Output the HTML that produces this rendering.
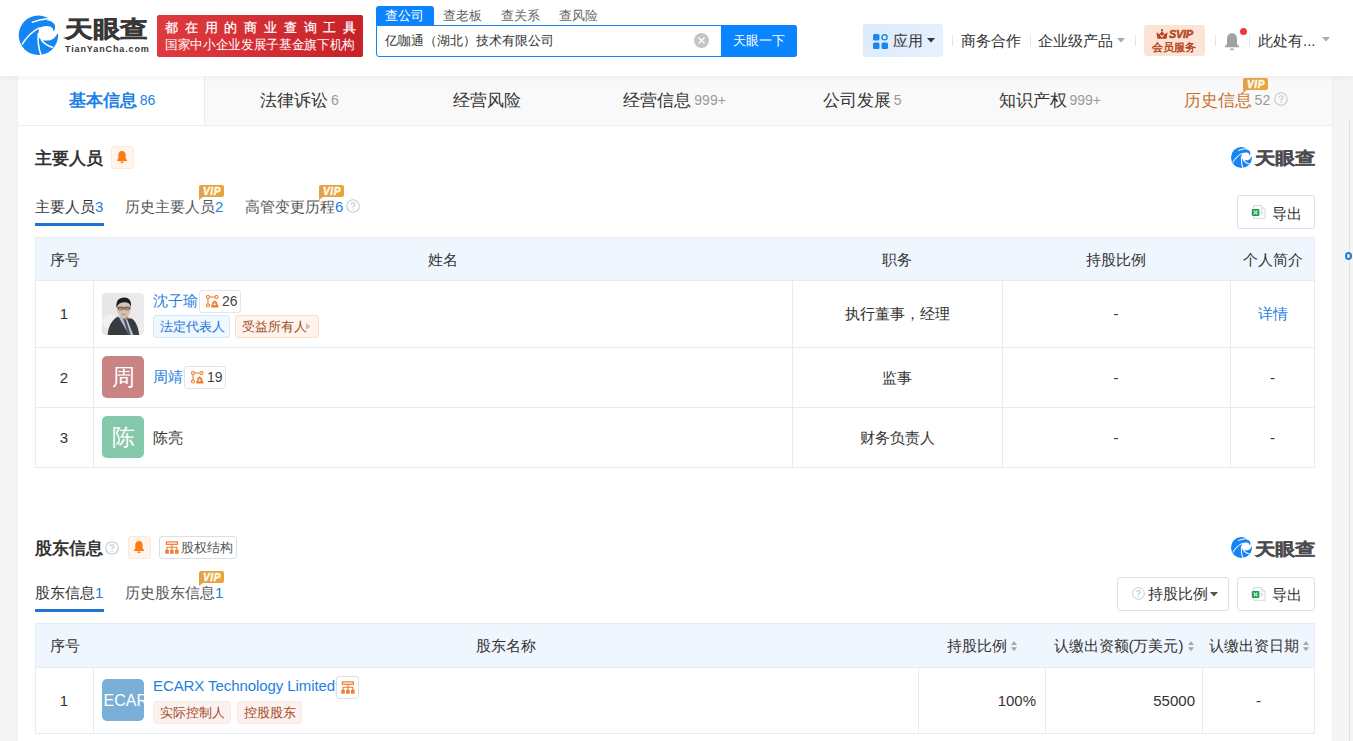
<!DOCTYPE html>
<html><head><meta charset="utf-8">
<style>
*{box-sizing:border-box;margin:0;padding:0}
html,body{width:1353px;height:741px;overflow:hidden;background:#f5f5f5;font-family:"Liberation Sans",sans-serif;color:#333}
.a{position:absolute;white-space:nowrap}
#hdr{position:absolute;left:0;top:0;width:1353px;height:76px;background:#fff;box-shadow:0 2px 6px rgba(0,0,0,0.05);z-index:5}
#main{position:absolute;left:18px;top:76px;width:1314px;height:700px;background:#fff;box-shadow:0 0 2px rgba(0,0,0,0.07)}
#tabbar{position:absolute;left:18px;top:76px;width:1314px;height:50px;background:#f9f9f9;border-bottom:1px solid #ededed}
.tab{position:absolute;top:0;height:49px;width:187.6px;text-align:center;font-size:17px;line-height:49px;color:#333}
.tab sup{font-size:14px;color:#999;vertical-align:baseline;position:relative;top:-1px;margin-left:3px}
.sep{position:absolute;width:1px;background:#e4e4e4}
.vip{position:absolute;width:25px;height:12px;background:linear-gradient(90deg,#e3a14a,#e7a63f);border-radius:2px 2px 2px 0;color:#fffbe9;font:italic bold 10px/13px "Liberation Sans",sans-serif;text-align:center;letter-spacing:0.7px;text-indent:1px;-webkit-text-stroke:0.45px #fffbe9}
.vip:after{content:"";position:absolute;left:0;bottom:-3px;border-left:4px solid #e3a14a;border-bottom:3px solid transparent}
.q{position:absolute;border:1px solid #c8ccd2;border-radius:50%;color:#b5b9bf;font-size:10px;text-align:center}
.bellbox{position:absolute;width:23px;height:23px;background:#fff5ec;border:1px solid #fbe9dc;border-radius:3px}
.btn{position:absolute;border:1px solid #dcdfe5;border-radius:3px;background:#fff}
table{border-collapse:collapse;position:absolute}
.tbl td,.tbl th{border:1px solid #e5ecf3;font-weight:normal;font-size:15px;color:#333}
.tbl th{background:#eff6fd;height:44px}
.blue{color:#1e7fe0}
.tag{position:absolute;white-space:nowrap;height:23px;font-size:13px;line-height:21px;border-radius:3px;padding:0 6px}
.tagb{background:#eff7ff;border:1px solid #d5e7fb;color:#2174d2}
.tago{background:#fff4eb;border:1px solid #fbdfcb;color:#9e4a26}
.tagp{background:#fdf1ef;border:1px solid #fbe9e5;color:#9e4a26}
.cnt{position:absolute;white-space:nowrap;height:23px;border:1px solid #e3e5e8;border-radius:3px;font-size:14px;line-height:21px;color:#444;padding-left:22px}
.av{position:absolute;width:42px;height:42px;border-radius:5px;color:#fff;font-size:23px;line-height:42px;text-align:center}
</style></head><body>

<!-- HEADER -->
<div id="hdr">
  <svg class="a" style="left:16px;top:12px" width="46" height="46" viewBox="0 0 46 46"><circle cx="22.4" cy="23.3" r="19.7" fill="#1485f2"/>
<path d="M22.9 16Q29 13 34.3 14.5Q37.2 15.8 37.7 19.4Q40.3 15.5 38.2 11.8Q35.5 8.6 31 8.5L32.6 6.3L46 2L46 21.6L41.4 21.6Q40 25 37.7 26.4Q34.5 28.6 31 28.6Q27.5 28.6 25.6 28Q22.6 26.5 22.4 23Z" fill="#fff"/>
<path d="M15.8 10.4Q23 7.2 32.6 6.4" stroke="#fff" stroke-width="1.5" fill="none"/>
<path d="M6 32.5Q13 21 23.6 15.6" stroke="#fff" stroke-width="1.5" fill="none"/>
<path d="M22.3 21Q21.3 33 25 43" stroke="#fff" stroke-width="1.5" fill="none"/>
<path d="M25.3 27.8Q29.5 33.5 37 35.5" stroke="#fff" stroke-width="1.5" fill="none"/>
</svg>
  <div class="a" style="left:65px;top:15px;font-size:28px;font-weight:bold;color:#3a3636;-webkit-text-stroke:0.7px #3a3636;line-height:36px;transform:scale(0.985,0.82);transform-origin:0 0">天眼查</div>
  <div class="a" style="left:65px;top:44px;font-size:9px;font-weight:bold;color:#3a3636;letter-spacing:0.88px;line-height:10px">TianYanCha.com</div>
  <div class="a" style="left:157px;top:15px;width:206px;height:42px;border-radius:2px;background:linear-gradient(90deg,#df3a40,#c82229)"></div>
  <div class="a" style="left:165px;top:19px;font-size:13px;color:#fff;letter-spacing:6.8px;line-height:18px;-webkit-text-stroke:0.25px #fff">都在用的商业查询工具</div>
  <div class="a" style="left:165px;top:36px;font-size:13px;color:#fff;line-height:18px;transform:scaleX(0.975);transform-origin:0 0">国家中小企业发展子基金旗下机构</div>

  <div class="a" style="left:376px;top:6px;width:58px;height:20px;background:#0a84ff;border-radius:3px 3px 0 0"></div>
  <div class="a" style="left:385px;top:6px;font-size:13px;color:#fff;line-height:19px">查公司</div>
  <div class="a" style="left:443px;top:6px;font-size:13px;color:#666;line-height:19px">查老板</div>
  <div class="a" style="left:501px;top:6px;font-size:13px;color:#666;line-height:19px">查关系</div>
  <div class="a" style="left:559px;top:6px;font-size:13px;color:#666;line-height:19px">查风险</div>
  <div class="a" style="left:376px;top:25px;width:421px;height:32px;border:1px solid #1e82e6;border-radius:0 3px 3px 3px;background:#fff"></div>
  <div class="a" style="left:385px;top:31px;font-size:13px;color:#333;line-height:19px">亿咖通（湖北）技术有限公司</div>
  <div class="a" style="left:694px;top:33px;width:15px;height:15px;border-radius:50%;background:#c3c4c8"></div>
  <svg class="a" style="left:694px;top:33px" width="15" height="15"><path d="M4.5 4.5L10.5 10.5M10.5 4.5L4.5 10.5" stroke="#fff" stroke-width="1.3"/></svg>
  <div class="a" style="left:721px;top:25px;width:76px;height:32px;background:#0a84ff;border-radius:0 3px 3px 0"></div>
  <div class="a" style="left:733px;top:31px;font-size:13px;color:#fff;line-height:19px">天眼一下</div>

  <div class="a" style="left:863px;top:24px;width:80px;height:33px;background:linear-gradient(135deg,#dbeafc,#e8f1fd);border-radius:3px"></div>
  <svg class="a" style="left:873px;top:34px" width="15" height="15">
    <rect x="0" y="0" width="6.5" height="6.5" rx="1.5" fill="#1a86f0"/>
    <circle cx="11.5" cy="3.3" r="2.6" fill="none" stroke="#1a86f0" stroke-width="1.4"/>
    <rect x="0" y="8.5" width="6.5" height="6.5" rx="1.5" fill="#1a86f0"/>
    <rect x="8.5" y="8.5" width="6.5" height="6.5" rx="1.5" fill="#1a86f0"/>
  </svg>
  <div class="a" style="left:893px;top:31px;font-size:15px;color:#333;line-height:19px">应用</div>
  <svg class="a" style="left:927px;top:38px" width="8" height="5"><path d="M0 0H8L4 4.5Z" fill="#333"/></svg>
  <div class="sep" style="left:952px;top:35px;height:11px"></div>
  <div class="a" style="left:961px;top:31px;font-size:15px;color:#333;line-height:19px">商务合作</div>
  <div class="sep" style="left:1030px;top:35px;height:11px"></div>
  <div class="a" style="left:1038px;top:31px;font-size:15px;color:#333;line-height:19px">企业级产品</div>
  <svg class="a" style="left:1117px;top:38px" width="8" height="5"><path d="M0 0H8L4 4.5Z" fill="#aaa"/></svg>
  <div class="sep" style="left:1135px;top:35px;height:11px"></div>
  <div class="a" style="left:1144px;top:25px;width:61px;height:31px;background:#fde3d6;border-radius:3px"></div>
  <svg class="a" style="left:1156px;top:29px" width="12" height="10" viewBox="0 0 12 10"><path d="M0.4 3.2L3.4 5.2L6 2L8.6 5.2L11.6 3.2L10.6 9.7H1.4Z" fill="#b4461c"/><circle cx="6" cy="1.2" r="1.1" fill="#b4461c"/><path d="M4.2 5.9L6 8L7.8 5.9" stroke="#fde3d6" stroke-width="1.1" fill="none"/></svg>
  <div class="a" style="left:1169px;top:28px;font-size:11px;font-weight:bold;font-style:italic;color:#b4461c;line-height:12px;letter-spacing:-0.3px;-webkit-text-stroke:0.4px #b4461c">SVIP</div>
  <div class="a" style="left:1152px;top:40px;font-size:11px;font-weight:bold;color:#b4461c;line-height:15px">会员服务</div>
  <div class="sep" style="left:1215px;top:35px;height:11px"></div>
  <svg class="a" style="left:1224px;top:32px" width="16" height="19" viewBox="0 0 16 19">
    <path d="M8 1.2C4.6 1.2 3 3.8 3 7V12L1 14.2V15.2H15V14.2L13 12V7C13 3.8 11.4 1.2 8 1.2Z" fill="#9fa3a8"/>
    <rect x="6" y="16.4" width="4" height="1.6" rx="0.8" fill="#9fa3a8"/>
  </svg>
  <div class="a" style="left:1240px;top:28px;width:7px;height:7px;border-radius:50%;background:#f0353b"></div>
  <div class="sep" style="left:1249px;top:35px;height:11px"></div>
  <div class="a" style="left:1258px;top:31px;font-size:15px;color:#333;line-height:19px">此处有...</div>
  <svg class="a" style="left:1322px;top:37px" width="8" height="5"><path d="M0 0H8L4 4.5Z" fill="#aaa"/></svg>
</div>

<!-- right gutter -->
<div class="a" style="left:1349px;top:120px;width:1px;height:621px;background:#e2e2e2"></div>
<div class="a" style="left:1345px;top:252px;width:7px;height:8px;border:2px solid #1e7fe0;border-radius:50%"></div>

<div id="main"></div>
<div id="tabbar">
  <div class="tab" style="left:0;background:#fff;color:#1a7fe5;font-weight:bold;border-right:1px solid #ebebeb;width:187px;text-indent:2px">基本信息<sup style="color:#1a7fe5;font-weight:normal">86</sup></div>
  <div class="tab" style="left:187.6px">法律诉讼<sup>6</sup></div>
  <div class="tab" style="left:375.2px">经营风险</div>
  <div class="tab" style="left:562.8px">经营信息<sup>999+</sup></div>
  <div class="tab" style="left:750.4px">公司发展<sup>5</sup></div>
  <div class="tab" style="left:938px">知识产权<sup>999+</sup></div>
  <div class="tab" style="left:1125.6px;color:#c9712d">历史信息<sup>52</sup><span style="display:inline-block;width:21px"></span></div>
  <div class="vip" style="left:1225px;top:2px">VIP</div>
  <svg class="a" style="left:1256px;top:16px" width="14" height="14" viewBox="0 0 14 14"><circle cx="7" cy="7" r="6.3" fill="none" stroke="#c3c7cd" stroke-width="1.05"/><path d="M5.1 5.5Q5.1 3.7 7 3.7Q8.9 3.7 8.9 5.3Q8.9 6.4 7.7 7Q7 7.4 7 8.5" fill="none" stroke="#bfc3c9" stroke-width="1.1"/><circle cx="7" cy="10.3" r="0.7" fill="#bfc3c9"/></svg>
</div>

<!-- SECTION 1 -->
<div class="a" style="left:35px;top:147px;font-size:17px;font-weight:bold;color:#333;line-height:24px">主要人员</div>
<div class="bellbox" style="left:111px;top:146px"></div>
<svg class="a" style="left:116px;top:150px" width="12" height="14" viewBox="0 0 12 14"><path d="M6 1C3.6 1 2.3 2.8 2.3 5V8.6L1 10.3V11H11V10.3L9.7 8.6V5C9.7 2.8 8.4 1 6 1Z" fill="#ff7b0f"/><path d="M4.3 11.6A1.7 1.7 0 0 0 7.7 11.6Z" fill="#ff7b0f"/></svg>
<!-- small logo -->
<svg class="a" style="left:1231px;top:147px" width="21" height="21" viewBox="2.7 3.6 39.4 39.4"><circle cx="22.4" cy="23.3" r="19.7" fill="#1485f2"/>
<path d="M22.9 16Q29 13 34.3 14.5Q37.2 15.8 37.7 19.4Q40.3 15.5 38.2 11.8Q35.5 8.6 31 8.5L32.6 6.3L46 2L46 21.6L41.4 21.6Q40 25 37.7 26.4Q34.5 28.6 31 28.6Q27.5 28.6 25.6 28Q22.6 26.5 22.4 23Z" fill="#fff"/>
<path d="M15.8 10.4Q23 7.2 32.6 6.4" stroke="#fff" stroke-width="1.9" fill="none"/>
<path d="M6 32.5Q13 21 23.6 15.6" stroke="#fff" stroke-width="1.9" fill="none"/>
<path d="M22.3 21Q21.3 33 25 43" stroke="#fff" stroke-width="1.9" fill="none"/>
<path d="M25.3 27.8Q29.5 33.5 37 35.5" stroke="#fff" stroke-width="1.9" fill="none"/>
</svg>
<div class="a" style="left:1255px;top:144px;font-size:20px;font-weight:bold;color:#4a4c50;-webkit-text-stroke:0.4px #4a4c50;line-height:28px;transform:scale(1.01,0.84);transform-origin:0 50%">天眼查</div>

<div class="a" style="left:35px;top:197px;font-size:15px;color:#333;line-height:20px">主要人员<span class="blue">3</span></div>
<div class="a" style="left:35px;top:223px;width:69px;height:3px;background:#1f76d2"></div>
<div class="a" style="left:125px;top:197px;font-size:15px;color:#555;line-height:20px">历史主要人员<span class="blue">2</span></div>
<div class="vip" style="left:199px;top:185px">VIP</div>
<div class="a" style="left:245px;top:197px;font-size:15px;color:#555;line-height:20px">高管变更历程<span class="blue">6</span></div>
<div class="vip" style="left:319px;top:185px">VIP</div>
<svg class="a" style="left:346px;top:199px" width="14" height="14" viewBox="0 0 14 14"><circle cx="7" cy="7" r="6.3" fill="none" stroke="#c3c7cd" stroke-width="1.05"/><path d="M5.1 5.5Q5.1 3.7 7 3.7Q8.9 3.7 8.9 5.3Q8.9 6.4 7.7 7Q7 7.4 7 8.5" fill="none" stroke="#bfc3c9" stroke-width="1.1"/><circle cx="7" cy="10.3" r="0.7" fill="#bfc3c9"/></svg>

<div class="btn" style="left:1237px;top:195px;width:78px;height:34px"></div>
<svg class="a" style="left:1251px;top:204px" width="16" height="16" viewBox="0 0 16 16"><path d="M2.6 1.5H10.3L14.1 5.2V14.3H2.6Z" fill="#fff" stroke="#d6d8db" stroke-width="1"/><path d="M10.3 1.5V5.2H14.1" fill="#eceef0" stroke="#d6d8db" stroke-width="0.8"/><rect x="0.8" y="5" width="7.6" height="7" rx="1" fill="#1f9d5c"/><path d="M2.7 6.6L6.5 10.4M6.5 6.6L2.7 10.4" stroke="#c8f5dc" stroke-width="1.3"/><rect x="10.2" y="6.7" width="1.3" height="3.9" fill="#d0d2d6"/></svg>
<div class="a" style="left:1272px;top:204px;font-size:15px;color:#333;line-height:20px">导出</div>

<!-- table 1 -->
<div class="a" style="left:35px;top:237px;width:1280px;height:231px;border:1px solid #e5ecf3"></div>
<div class="a" style="left:36px;top:238px;width:1278px;height:42px;background:#eff6fd"></div>
<div class="a" style="left:35px;top:280px;width:1280px;height:1px;background:#e5ecf3"></div>
<div class="a" style="left:35px;top:347px;width:1280px;height:1px;background:#e5ecf3"></div>
<div class="a" style="left:35px;top:407px;width:1280px;height:1px;background:#e5ecf3"></div>
<div class="a" style="left:93px;top:280px;width:1px;height:187px;background:#e5ecf3"></div>
<div class="a" style="left:792px;top:280px;width:1px;height:187px;background:#e5ecf3"></div>
<div class="a" style="left:1002px;top:280px;width:1px;height:187px;background:#e5ecf3"></div>
<div class="a" style="left:1230px;top:280px;width:1px;height:187px;background:#e5ecf3"></div>

<div class="a" style="left:50px;top:250px;font-size:15px;line-height:20px">序号</div>
<div class="a" style="left:93px;width:699px;top:250px;font-size:15px;line-height:20px;text-align:center">姓名</div>
<div class="a" style="left:792px;width:210px;top:250px;font-size:15px;line-height:20px;text-align:center">职务</div>
<div class="a" style="left:1002px;width:228px;top:250px;font-size:15px;line-height:20px;text-align:center">持股比例</div>
<div class="a" style="left:1230px;width:85px;top:250px;font-size:15px;line-height:20px;text-align:center">个人简介</div>

<div class="a" style="left:35px;width:58px;top:304px;font-size:15px;line-height:20px;text-align:center">1</div>
<div class="a" style="left:35px;width:58px;top:368px;font-size:15px;line-height:20px;text-align:center">2</div>
<div class="a" style="left:35px;width:58px;top:428px;font-size:15px;line-height:20px;text-align:center">3</div>

<!-- photo -->
<div class="a" style="left:102px;top:293px;width:42px;height:42px;border-radius:4px;overflow:hidden;background:linear-gradient(90deg,#e6e6e6,#ececec)">
  <svg width="42" height="42" viewBox="0 0 41 41">
    <ellipse cx="8" cy="28" rx="8" ry="7" fill="#f1f1f1"/>
    <path d="M18 19L26 19L25.5 25L19 24.5Z" fill="#c9a48b"/>
    <path d="M5.5 42C6 33 9 27 15 23.2L20 24.5L29 25C33.5 28 35.5 34 36.5 42Z" fill="#383b40"/>
    <path d="M16 23L19.5 22.5L24.5 25.5L31 42L27 42Z" fill="#b7c3d3"/>
    <path d="M20.5 25L26 42L28.5 42L23 25.5Z" fill="#4d5663"/>
    <ellipse cx="21.3" cy="15.5" rx="6.7" ry="8.6" fill="#d9bfae"/>
    <path d="M14.2 15C13.3 7.5 16.5 4.3 21.5 4.3C26.5 4.3 29 7.5 28.3 14C27.8 10.5 25.5 8.8 21.3 9C17.5 9.1 15.2 11 14.2 15Z" fill="#1d1d1d"/>
    <path d="M14.8 14.6H28" stroke="#333" stroke-width="0.7"/>
    <rect x="16" y="13.8" width="4.6" height="2.6" rx="0.8" fill="none" stroke="#333" stroke-width="0.6"/>
    <rect x="22.2" y="13.8" width="4.6" height="2.6" rx="0.8" fill="none" stroke="#333" stroke-width="0.6"/>
    <path d="M19 20.5Q21.3 21.5 23.5 20.5" stroke="#9a7a68" stroke-width="0.7" fill="none"/>
  </svg>
</div>
<div class="a blue" style="left:153px;top:291px;font-size:15px;line-height:20px">沈子瑜</div>
<div class="cnt" style="left:199px;top:290px;width:42px">26</div>
<svg class="a" style="left:206px;top:295px" width="13" height="13" viewBox="0 0 13 13"><circle cx="2" cy="2" r="1.5" fill="none" stroke="#f07a2d" stroke-width="1.1"/><circle cx="10.5" cy="2" r="1.5" fill="none" stroke="#f07a2d" stroke-width="1.1"/><circle cx="2" cy="10.5" r="1.5" fill="none" stroke="#f07a2d" stroke-width="1.1"/><path d="M3.5 2H9M2 3.5V9" stroke="#f07a2d" stroke-width="1.1"/><path d="M8.7 5.3L12 8.2H11V9.5H12.3V12.6H5.3V9.5H6.5V8.2H5.4Z" fill="#f07a2d"/><path d="M8.7 7.6V10.8M7.4 9.3H10" stroke="#fff" stroke-width="0.8"/></svg>
<div class="tag tagb" style="left:153px;top:315px;width:77px">法定代表人</div>
<div class="tag tago" style="left:235px;top:315px;width:84px">受益所有人</div>
<svg class="a" style="left:306px;top:323px" width="5" height="7"><path d="M0 0L4.5 3.5L0 7Z" fill="#e2b9a3"/></svg>

<div class="a blue" style="left:792px;width:210px;top:304px;font-size:15px;line-height:20px;text-align:center;color:#333">执行董事，经理</div>
<div class="a" style="left:1002px;width:228px;top:304px;font-size:15px;line-height:20px;text-align:center">-</div>
<div class="a blue" style="left:1230px;width:85px;top:304px;font-size:15px;line-height:20px;text-align:center">详情</div>

<div class="av" style="left:102px;top:356px;background:#c98383">周</div>
<div class="a blue" style="left:153px;top:367px;font-size:15px;line-height:20px">周靖</div>
<div class="cnt" style="left:184px;top:366px;width:42px">19</div><svg class="a" style="left:191px;top:371px" width="13" height="13" viewBox="0 0 13 13"><circle cx="2" cy="2" r="1.5" fill="none" stroke="#f07a2d" stroke-width="1.1"/><circle cx="10.5" cy="2" r="1.5" fill="none" stroke="#f07a2d" stroke-width="1.1"/><circle cx="2" cy="10.5" r="1.5" fill="none" stroke="#f07a2d" stroke-width="1.1"/><path d="M3.5 2H9M2 3.5V9" stroke="#f07a2d" stroke-width="1.1"/><path d="M8.7 5.3L12 8.2H11V9.5H12.3V12.6H5.3V9.5H6.5V8.2H5.4Z" fill="#f07a2d"/><path d="M8.7 7.6V10.8M7.4 9.3H10" stroke="#fff" stroke-width="0.8"/></svg>
<div class="a" style="left:792px;width:210px;top:368px;font-size:15px;line-height:20px;text-align:center">监事</div>
<div class="a" style="left:1002px;width:228px;top:368px;font-size:15px;line-height:20px;text-align:center">-</div>
<div class="a" style="left:1230px;width:85px;top:368px;font-size:15px;line-height:20px;text-align:center">-</div>

<div class="av" style="left:102px;top:416px;background:#85c9ac">陈</div>
<div class="a" style="left:153px;top:428px;font-size:15px;line-height:20px">陈亮</div>
<div class="a" style="left:792px;width:210px;top:428px;font-size:15px;line-height:20px;text-align:center">财务负责人</div>
<div class="a" style="left:1002px;width:228px;top:428px;font-size:15px;line-height:20px;text-align:center">-</div>
<div class="a" style="left:1230px;width:85px;top:428px;font-size:15px;line-height:20px;text-align:center">-</div>

<!-- SECTION 2 -->
<div class="a" style="left:35px;top:537px;font-size:17px;font-weight:bold;color:#333;line-height:24px">股东信息</div>
<svg class="a" style="left:105px;top:541px" width="14" height="14" viewBox="0 0 14 14"><circle cx="7" cy="7" r="6.3" fill="none" stroke="#c3c7cd" stroke-width="1.05"/><path d="M5.1 5.5Q5.1 3.7 7 3.7Q8.9 3.7 8.9 5.3Q8.9 6.4 7.7 7Q7 7.4 7 8.5" fill="none" stroke="#bfc3c9" stroke-width="1.1"/><circle cx="7" cy="10.3" r="0.7" fill="#bfc3c9"/></svg>
<div class="bellbox" style="left:128px;top:536px"></div>
<svg class="a" style="left:133px;top:540px" width="12" height="14" viewBox="0 0 12 14"><path d="M6 1C3.6 1 2.3 2.8 2.3 5V8.6L1 10.3V11H11V10.3L9.7 8.6V5C9.7 2.8 8.4 1 6 1Z" fill="#ff7b0f"/><path d="M4.3 11.6A1.7 1.7 0 0 0 7.7 11.6Z" fill="#ff7b0f"/></svg>
<div class="btn" style="left:159px;top:536px;width:78px;height:23px"></div>
<svg class="a" style="left:165px;top:541px" width="14" height="13" viewBox="0 0 14 13"><rect x="1.4" y="0.9" width="11" height="2.4" fill="none" stroke="#f07a2d" stroke-width="1.2"/><path d="M6.9 3.3V6.3M2 9V6.3H11.8V9M6.9 6.3V9" fill="none" stroke="#f07a2d" stroke-width="1.1"/><rect x="0.3" y="8.8" width="3.5" height="3.9" fill="#f07a2d"/><rect x="5.1" y="8.8" width="3.6" height="3.9" fill="#f07a2d"/><rect x="10" y="8.8" width="3.6" height="3.9" fill="#f07a2d"/><path d="M2 10.8h0.1M6.9 10.8h0.1M11.8 10.8h0.1" stroke="#fff" stroke-width="1.2"/></svg>
<div class="a" style="left:181px;top:538px;font-size:13px;color:#555;line-height:19px">股权结构</div>

<svg class="a" style="left:1231px;top:537px" width="21" height="21" viewBox="2.7 3.6 39.4 39.4"><circle cx="22.4" cy="23.3" r="19.7" fill="#1485f2"/>
<path d="M22.9 16Q29 13 34.3 14.5Q37.2 15.8 37.7 19.4Q40.3 15.5 38.2 11.8Q35.5 8.6 31 8.5L32.6 6.3L46 2L46 21.6L41.4 21.6Q40 25 37.7 26.4Q34.5 28.6 31 28.6Q27.5 28.6 25.6 28Q22.6 26.5 22.4 23Z" fill="#fff"/>
<path d="M15.8 10.4Q23 7.2 32.6 6.4" stroke="#fff" stroke-width="1.9" fill="none"/>
<path d="M6 32.5Q13 21 23.6 15.6" stroke="#fff" stroke-width="1.9" fill="none"/>
<path d="M22.3 21Q21.3 33 25 43" stroke="#fff" stroke-width="1.9" fill="none"/>
<path d="M25.3 27.8Q29.5 33.5 37 35.5" stroke="#fff" stroke-width="1.9" fill="none"/>
</svg>
<div class="a" style="left:1255px;top:535px;font-size:20px;font-weight:bold;color:#4a4c50;-webkit-text-stroke:0.4px #4a4c50;line-height:28px;transform:scale(1.01,0.84);transform-origin:0 50%">天眼查</div>

<div class="a" style="left:35px;top:583px;font-size:15px;color:#333;line-height:20px">股东信息<span class="blue">1</span></div>
<div class="a" style="left:35px;top:609px;width:69px;height:3px;background:#1f76d2"></div>
<div class="a" style="left:125px;top:583px;font-size:15px;color:#555;line-height:20px">历史股东信息<span class="blue">1</span></div>
<div class="vip" style="left:199px;top:571px">VIP</div>

<div class="btn" style="left:1117px;top:577px;width:112px;height:34px"></div>
<svg class="a" style="left:1132px;top:587px" width="13" height="13" viewBox="0 0 14 14"><circle cx="7" cy="7" r="6.3" fill="none" stroke="#c3c7cd" stroke-width="1.05"/><path d="M5.1 5.5Q5.1 3.7 7 3.7Q8.9 3.7 8.9 5.3Q8.9 6.4 7.7 7Q7 7.4 7 8.5" fill="none" stroke="#bfc3c9" stroke-width="1.1"/><circle cx="7" cy="10.3" r="0.7" fill="#bfc3c9"/></svg>
<div class="a" style="left:1148px;top:584px;font-size:15px;color:#333;line-height:20px">持股比例</div>
<svg class="a" style="left:1210px;top:592px" width="8" height="5"><path d="M0 0H8L4 4.5Z" fill="#555"/></svg>
<div class="btn" style="left:1237px;top:577px;width:78px;height:34px"></div>
<svg class="a" style="left:1251px;top:586px" width="16" height="16" viewBox="0 0 16 16"><path d="M2.6 1.5H10.3L14.1 5.2V14.3H2.6Z" fill="#fff" stroke="#d6d8db" stroke-width="1"/><path d="M10.3 1.5V5.2H14.1" fill="#eceef0" stroke="#d6d8db" stroke-width="0.8"/><rect x="0.8" y="5" width="7.6" height="7" rx="1" fill="#1f9d5c"/><path d="M2.7 6.6L6.5 10.4M6.5 6.6L2.7 10.4" stroke="#c8f5dc" stroke-width="1.3"/><rect x="10.2" y="6.7" width="1.3" height="3.9" fill="#d0d2d6"/></svg>
<div class="a" style="left:1272px;top:585px;font-size:15px;color:#333;line-height:20px">导出</div>

<!-- table 2 -->
<div class="a" style="left:35px;top:623px;width:1280px;height:111px;border:1px solid #e5ecf3"></div>
<div class="a" style="left:36px;top:624px;width:1278px;height:43px;background:#eff6fd"></div>
<div class="a" style="left:35px;top:667px;width:1280px;height:1px;background:#e5ecf3"></div>
<div class="a" style="left:93px;top:667px;width:1px;height:67px;background:#e5ecf3"></div>
<div class="a" style="left:918px;top:667px;width:1px;height:67px;background:#e5ecf3"></div>
<div class="a" style="left:1045px;top:667px;width:1px;height:67px;background:#e5ecf3"></div>
<div class="a" style="left:1202px;top:667px;width:1px;height:67px;background:#e5ecf3"></div>

<div class="a" style="left:50px;top:636px;font-size:15px;line-height:20px">序号</div>
<div class="a" style="left:93px;width:825px;top:636px;font-size:15px;line-height:20px;text-align:center">股东名称</div>
<div class="a" style="left:918px;width:127px;top:636px;font-size:15px;line-height:20px;text-align:center">持股比例<svg width="6" height="11" style="margin-left:4px;vertical-align:-1px" viewBox="0 0 6 11"><path d="M0 4L3 0.3L6 4Z M0 6.3L3 10.3L6 6.3Z" fill="#a3a7ad"/></svg></div>
<div class="a" style="left:1045px;width:157px;top:636px;font-size:15px;line-height:20px;text-align:center">认缴出资额(万美元)<svg width="6" height="11" style="margin-left:4px;vertical-align:-1px" viewBox="0 0 6 11"><path d="M0 4L3 0.3L6 4Z M0 6.3L3 10.3L6 6.3Z" fill="#a3a7ad"/></svg></div>
<div class="a" style="left:1202px;width:113px;top:636px;font-size:15px;line-height:20px;text-align:center">认缴出资日期<svg width="6" height="11" style="margin-left:4px;vertical-align:-1px" viewBox="0 0 6 11"><path d="M0 4L3 0.3L6 4Z M0 6.3L3 10.3L6 6.3Z" fill="#a3a7ad"/></svg></div>

<div class="a" style="left:35px;width:58px;top:691px;font-size:15px;line-height:20px;text-align:center">1</div>
<div class="a" style="left:102px;top:679px;width:42px;height:42px;border-radius:5px;background:#7aafd7;overflow:hidden;color:#fff;font-size:16px;line-height:44px;text-indent:1.5px">ECAR</div>
<div class="a blue" style="left:153px;top:676px;font-size:15px;line-height:20px;letter-spacing:-0.08px">ECARX Technology Limited</div>
<div class="btn" style="left:336px;top:676px;width:23px;height:23px"></div>
<svg class="a" style="left:341px;top:681px" width="14" height="13" viewBox="0 0 14 13"><rect x="1.4" y="0.9" width="11" height="2.4" fill="none" stroke="#f07a2d" stroke-width="1.2"/><path d="M6.9 3.3V6.3M2 9V6.3H11.8V9M6.9 6.3V9" fill="none" stroke="#f07a2d" stroke-width="1.1"/><rect x="0.3" y="8.8" width="3.5" height="3.9" fill="#f07a2d"/><rect x="5.1" y="8.8" width="3.6" height="3.9" fill="#f07a2d"/><rect x="10" y="8.8" width="3.6" height="3.9" fill="#f07a2d"/><path d="M2 10.8h0.1M6.9 10.8h0.1M11.8 10.8h0.1" stroke="#fff" stroke-width="1.2"/></svg>
<div class="tag tagp" style="left:153px;top:701px;width:78px">实际控制人</div>
<div class="tag tagp" style="left:237px;top:701px;width:65px">控股股东</div>
<div class="a" style="left:918px;width:118px;top:691px;font-size:15px;line-height:20px;text-align:right">100%</div>
<div class="a" style="left:1045px;width:150px;top:691px;font-size:15px;line-height:20px;text-align:right">55000</div>
<div class="a" style="left:1202px;width:113px;top:691px;font-size:15px;line-height:20px;text-align:center">-</div>
</body></html>
